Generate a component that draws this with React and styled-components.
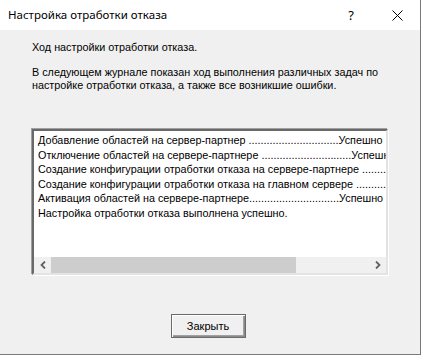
import React from 'react';
import styled, { createGlobalStyle } from 'styled-components';

const GlobalStyle = createGlobalStyle`
  html, body {
    margin: 0;
    padding: 0;
    background: #ffffff;
  }
`;

const Window = styled.div`
  width: 420px;
  height: 354px;
  background: #f0f0f0;
  border-right: 1px solid #7a7a7a;
  border-bottom: 1px solid #7a7a7a;
  display: flex;
  flex-direction: column;
  font-family: 'Liberation Sans', Arial, sans-serif;
  font-size: 10.8px;
  color: #000;
`;

const TitleBar = styled.div`
  height: 30px;
  background: #ffffff;
  display: flex;
  align-items: center;
  padding-left: 8px;
  font-family: 'Noto Sans', 'Open Sans', sans-serif;
  font-size: 11.5px;
`;

const Title = styled.div`
  flex: 1;
  margin-top: -1px;
`;

const TitleButton = styled.div`
  width: 46px;
  height: 30px;
  display: flex;
  align-items: center;
  justify-content: center;
  font-size: 13px;
`;

const Body = styled.div`
  flex: 1;
  display: flex;
  flex-direction: column;
  padding: 11px 32px 0 32px;
`;

const Text = styled.p`
  margin: 0 0 ${p => p.gap || 0}px 0;
  line-height: 13px;
`;

const ListBox = styled.div`
  width: 352px;
  height: 142px;
  background: #ffffff;
  border-style: solid;
  border-width: 2px;
  border-color: #696969 #e3e3e3 #e3e3e3 #696969;
  box-shadow: -1px -1px 0 #a0a0a0, 1px 1px 0 #ffffff;
  margin-top: 1px;
  display: flex;
  flex-direction: column;
`;

const Rows = styled.div`
  flex: 1;
  overflow: hidden;
  padding: 2px 0 0 4px;
`;

const Row = styled.div`
  white-space: nowrap;
  line-height: 14.5px;
`;

const HScroll = styled.div`
  height: 16px;
  background: #f0f0f0;
  display: flex;
  align-items: center;
`;

const Arrow = styled.div`
  width: 17px;
  height: 16px;
  display: flex;
  align-items: center;
  justify-content: center;
`;

const Track = styled.div`
  flex: 1;
  height: 16px;
  display: flex;
`;

const Thumb = styled.div`
  height: 16px;
  background: #cdcdcd;
`;

const Footer = styled.div`
  display: flex;
  justify-content: center;
  margin-top: 39px;
  padding-right: 4px;
`;

const Button = styled.button`
  width: 75px;
  height: 24px;
  padding: 0;
  background: #f0f0f0;
  border: 1px solid #6a6a6a;
  box-shadow: inset 1px 1px 0 #ffffff, inset -1px -1px 0 #8a8a8a,
    inset -2px -2px 0 #a0a0a0;
  font-family: 'Liberation Sans', Arial, sans-serif;
  font-size: 11px;
  color: #000;
`;

const dots = n => '.'.repeat(n);

const rows = [
  `Добавление областей на сервер-партнер ${dots(30)}Успешно`,
  `Отключение областей на сервере-партнере ${dots(30)}Успешно`,
  `Создание конфигурации отработки отказа на сервере-партнере ${dots(28)}Успешно`,
  `Создание конфигурации отработки отказа на главном сервере ${dots(28)}Успешно`,
  `Активация областей на сервере-партнере${dots(30)}Успешно`,
  'Настройка отработки отказа выполнена успешно.',
];

const Chevron = ({ dir }) => (
  <svg width="6" height="8" viewBox="0 0 6 8">
    <polyline
      points={dir === 'left' ? '5,0.5 1.5,4 5,7.5' : '1,0.5 4.5,4 1,7.5'}
      fill="none"
      stroke="#606060"
      strokeWidth="1.8"
    />
  </svg>
);

export default function App() {
  return (
    <>
      <GlobalStyle />
      <Window>
        <TitleBar>
          <Title>Настройка отработки отказа</Title>
          <TitleButton>?</TitleButton>
          <TitleButton>
            <svg width="11" height="11" viewBox="0 0 11 11">
              <path d="M0.5 0.5 L10.5 10.5 M10.5 0.5 L0.5 10.5" stroke="#000" strokeWidth="1" />
            </svg>
          </TitleButton>
        </TitleBar>
        <Body>
          <Text gap={12}>Ход настройки отработки отказа.</Text>
          <Text gap={36}>
            В следующем журнале показан ход выполнения различных задач по
            <br />
            настройке отработки отказа, а также все возникшие ошибки.
          </Text>
          <ListBox>
            <Rows>
              {rows.map(r => (
                <Row key={r}>{r}</Row>
              ))}
            </Rows>
            <HScroll>
              <Arrow>
                <Chevron dir="left" />
              </Arrow>
              <Track>
                <Thumb style={{ width: '77%' }} />
              </Track>
              <Arrow>
                <Chevron dir="right" />
              </Arrow>
            </HScroll>
          </ListBox>
          <Footer>
            <Button>Закрыть</Button>
          </Footer>
        </Body>
      </Window>
    </>
  );
}
